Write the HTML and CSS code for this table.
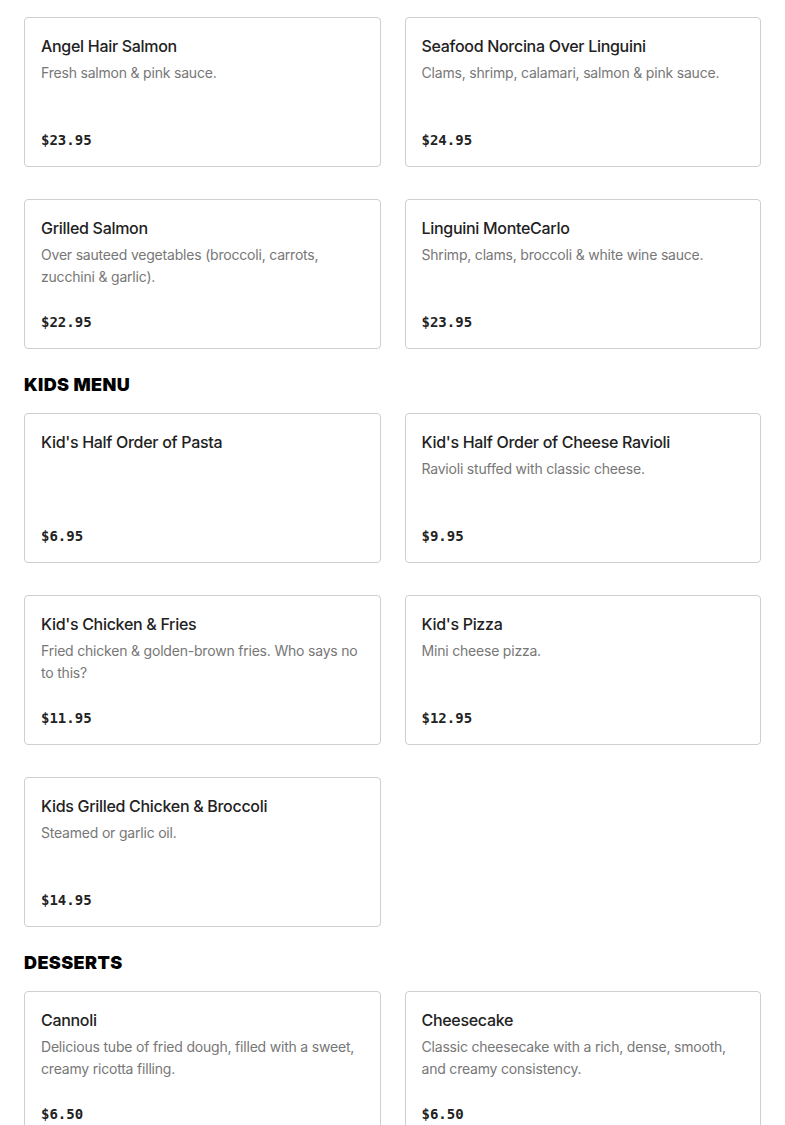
FILE: index.html
```html
<!DOCTYPE html>
<html lang="en">
<head>
    <meta charset="UTF-8">
    <meta name="viewport" content="width=device-width, initial-scale=1.0">
    <title>Menu</title>
    <link rel="stylesheet" href="styles.css">
</head>
<body>

    <div class="menu">
        <div class="menu-grid">
            <div class="item">
                <h3 class="item-name">Angel Hair Salmon</h3>
                <p class="item-desc">Fresh salmon &amp; pink sauce.</p>
                <span class="item-price">$23.95</span>
            </div>
            <div class="item">
                <h3 class="item-name">Seafood Norcina Over Linguini</h3>
                <p class="item-desc">Clams, shrimp, calamari, salmon &amp; pink sauce.</p>
                <span class="item-price">$24.95</span>
            </div>
            <div class="item">
                <h3 class="item-name">Grilled Salmon</h3>
                <p class="item-desc">Over sauteed vegetables (broccoli, carrots, zucchini &amp; garlic).</p>
                <span class="item-price">$22.95</span>
            </div>
            <div class="item">
                <h3 class="item-name">Linguini MonteCarlo</h3>
                <p class="item-desc">Shrimp, clams, broccoli &amp; white wine sauce.</p>
                <span class="item-price">$23.95</span>
            </div>
        </div>

        <h2 class="section-title">KIDS MENU</h2>
        <div class="menu-grid">
            <div class="item">
                <h3 class="item-name">Kid's Half Order of Pasta</h3>
                <span class="item-price">$6.95</span>
            </div>
            <div class="item">
                <h3 class="item-name">Kid's Half Order of Cheese Ravioli</h3>
                <p class="item-desc">Ravioli stuffed with classic cheese.</p>
                <span class="item-price">$9.95</span>
            </div>
            <div class="item">
                <h3 class="item-name">Kid's Chicken &amp; Fries</h3>
                <p class="item-desc">Fried chicken &amp; golden-brown fries. Who says no to this?</p>
                <span class="item-price">$11.95</span>
            </div>
            <div class="item">
                <h3 class="item-name">Kid's Pizza</h3>
                <p class="item-desc">Mini cheese pizza.</p>
                <span class="item-price">$12.95</span>
            </div>
            <div class="item">
                <h3 class="item-name">Kids Grilled Chicken &amp; Broccoli</h3>
                <p class="item-desc">Steamed or garlic oil.</p>
                <span class="item-price">$14.95</span>
            </div>
        </div>

        <h2 class="section-title">DESSERTS</h2>
        <div class="menu-grid">
            <div class="item">
                <h3 class="item-name">Cannoli</h3>
                <p class="item-desc">Delicious tube of fried dough, filled with a sweet, creamy ricotta filling.</p>
                <span class="item-price">$6.50</span>
            </div>
            <div class="item">
                <h3 class="item-name">Cheesecake</h3>
                <p class="item-desc">Classic cheesecake with a rich, dense, smooth, and creamy consistency.</p>
                <span class="item-price">$6.50</span>
            </div>
        </div>
    </div>

</body>
</html>
```

FILE: styles.css
```css
body {
    font-family: "Inter", "Liberation Sans", sans-serif;
    background-color: #fff;
    color: #222;
    margin: 0;
    padding: 0;
}

.menu {
    padding: 17px 24px 24px;
}

.menu-grid {
    display: grid;
    grid-template-columns: 1fr 1fr;
    column-gap: 24px;
    row-gap: 32px;
}

.section-title {
    margin: 24px 0 16px;
    font-size: 18px;
    line-height: 24px;
    font-weight: 900;
    color: #000;
    letter-spacing: 0.4px;
}

.item {
    display: flex;
    flex-direction: column;
    height: 150px;
    box-sizing: border-box;
    padding: 16px;
    border: 1px solid #cfcfcf;
    border-radius: 4px;
}

.item-name {
    margin: 0;
    font-size: 16px;
    line-height: 24px;
    font-weight: 500;
    letter-spacing: -0.3px;
    color: #222;
}

.item-desc {
    margin: 4px 0 0;
    font-size: 14px;
    line-height: 22px;
    letter-spacing: -0.2px;
    color: #777;
}

.item-price {
    margin-top: auto;
    margin-bottom: -1px;
    font-family: "DejaVu Sans Mono", "Liberation Mono", monospace;
    font-size: 14px;
    line-height: 22px;
    font-weight: bold;
    color: #222;
}
```
